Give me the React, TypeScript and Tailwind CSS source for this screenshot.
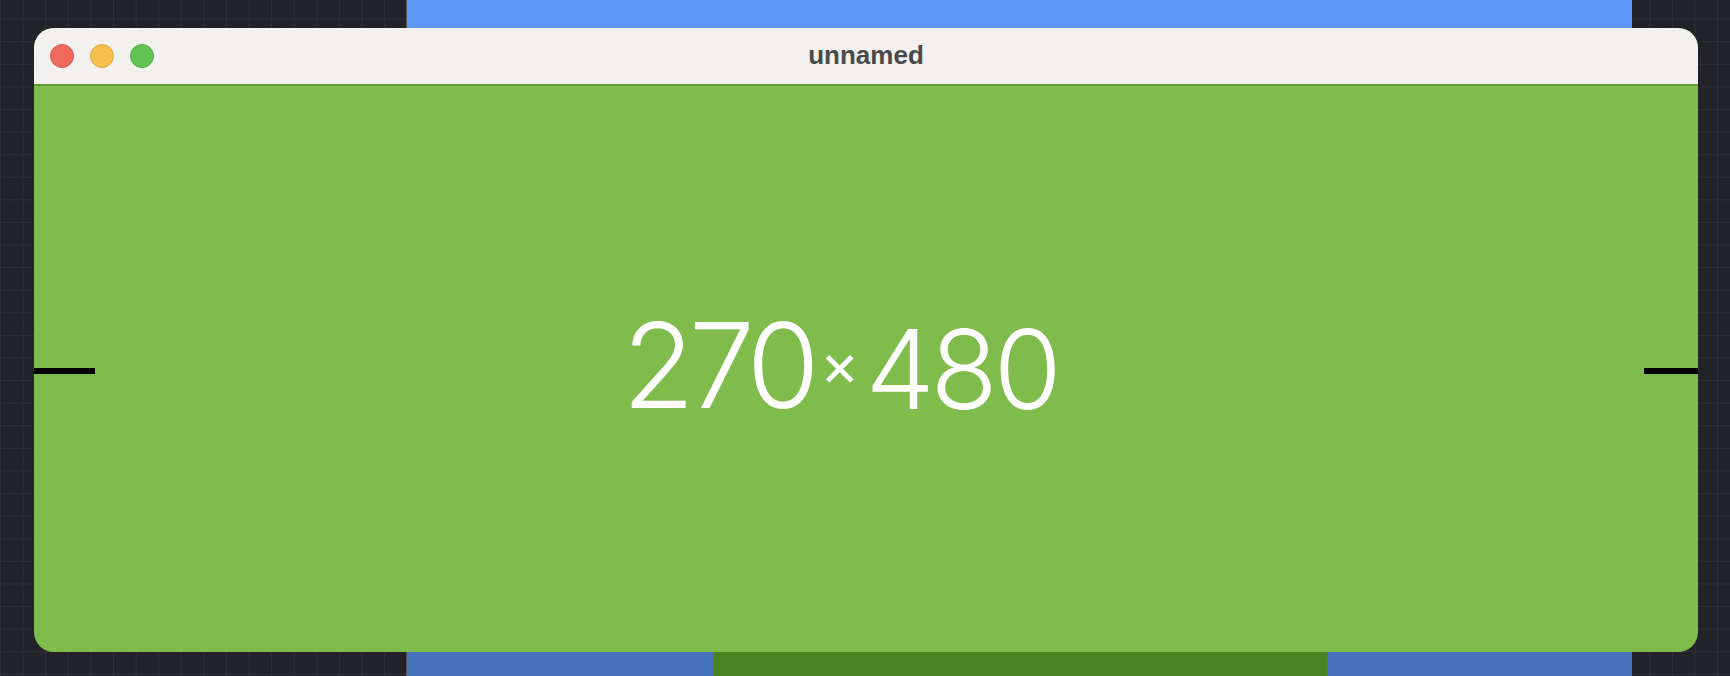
import React from 'react'

function Lights() {
  return (
    <div className="flex items-center gap-4 pl-4">
      <span className="w-6 h-6 rounded-full bg-[#ee6a5f] border border-[#d9564b]" />
      <span className="w-6 h-6 rounded-full bg-[#f6c050] border border-[#dfa63c]" />
      <span className="w-6 h-6 rounded-full bg-[#61c554] border border-[#4ead43]" />
    </div>
  )
}

export default function App() {
  return (
    <div
      className="relative w-[1730px] h-[676px] overflow-hidden bg-[#212329]"
      style={{
        backgroundImage:
          'linear-gradient(to right, #2d2f35 1px, transparent 1px), linear-gradient(to bottom, #2d2f35 1px, transparent 1px)',
        backgroundSize: '22.6px 22.6px',
        backgroundPosition: '0px -4px',
      }}
    >
      {/* canvas behind the window */}
      <div className="ml-[406px] w-[1226px] h-full flex flex-col border-l border-[#55575c]">
        <div className="flex-1 bg-[#5d97f6]" />
        <div className="h-[24px] flex">
          <div className="w-[307px] bg-[#4672bb]" />
          <div className="w-[613px] bg-[#4b8422]" />
          <div className="flex-1 bg-[#4672bb]" />
        </div>
      </div>

      {/* window */}
      <div className="absolute left-[34px] top-[28px] w-[1664px] h-[624px] rounded-[20px] overflow-hidden flex flex-col bg-[#7fbc4b]">
        <div className="relative h-[58px] shrink-0 bg-[#f2f1ef] border-b-2 border-[#5c9c2e] flex items-center">
          <Lights />
          <div className="absolute inset-0 flex items-center justify-center">
            <span className="text-[26px] font-bold text-[#4a4a4a] font-['Liberation_Sans',sans-serif] -mt-[2px]">
              unnamed
            </span>
          </div>
        </div>
        <div className="relative flex-1 flex items-center justify-center">
          <div className="absolute left-0 top-[282px] w-[61px] h-[6px] bg-black" />
          <div className="absolute right-0 top-[282px] w-[54px] h-[6px] bg-black" />
          <div className="mr-[52px] -mt-[8px] flex items-end text-white font-['Inter',sans-serif] font-light leading-none">
            <span className="text-[118px] tracking-[-6px]">270</span>
            <span className="text-[60px] font-normal mb-[30px] mx-[6px]">×</span>
            <span className="text-[110px] tracking-[-4px]">480</span>
          </div>
        </div>
      </div>
    </div>
  )
}
